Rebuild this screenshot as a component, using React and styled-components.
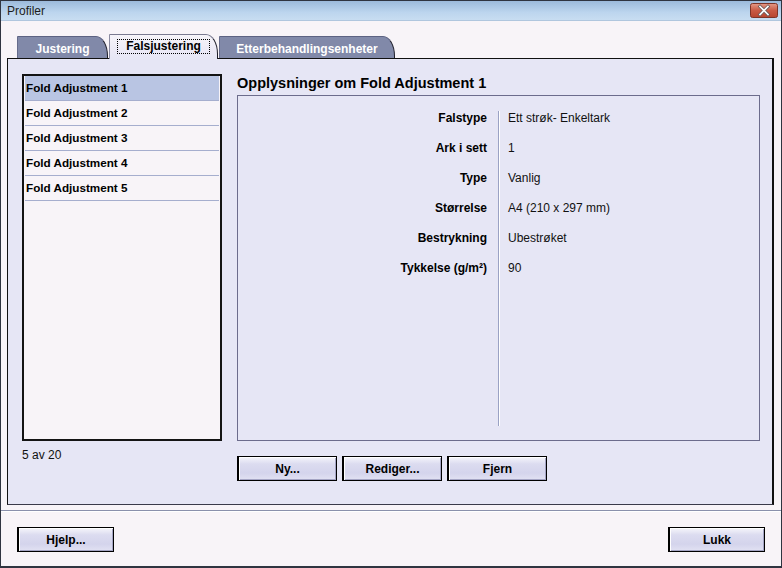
import React from 'react';
import styled, { createGlobalStyle } from 'styled-components';

const GlobalStyle = createGlobalStyle`
  html, body { margin: 0; padding: 0; }
  body {
    font-family: 'Liberation Sans', Arial, sans-serif;
    font-size: 12px;
    color: #000;
    background: #f8f4f8;
  }
`;

const Window = styled.div`
  width: 782px;
  height: 568px;
  box-sizing: border-box;
  border: 1px solid #2f3440;
  border-bottom-width: 2px;
  background: #f8f4f8;
  display: flex;
  flex-direction: column;
`;

const TitleBar = styled.div`
  height: 19px;
  display: flex;
  align-items: center;
  justify-content: space-between;
  padding: 0 3px 0 6px;
  background: linear-gradient(#9cbadb, #bcd5ee 60%, #c8ddf1);
  border-bottom: 1px solid #b0c6de;
  color: #1c1c1c;
  font-size: 12px;
`;

const Content = styled.div`
  padding: 13px 7px 0 6px;
`;

const TabStrip = styled.div`
  display: flex;
  align-items: flex-end;
  gap: 1px;
  height: 24px;
  padding-left: 10px;
  position: relative;
  z-index: 1;
`;

const Tab = styled.div`
  box-sizing: border-box;
  width: ${p => p.w}px;
  height: ${p => (p.active ? 25 : 22)}px;
  margin-bottom: ${p => (p.active ? -1 : 0)}px;
  display: flex;
  align-items: center;
  justify-content: center;
  padding: ${p => (p.active ? '0 0 2px 0' : '2px 0 0 0')};
  font-weight: bold;
  font-size: 12px;
  color: ${p => (p.active ? '#000' : '#fff')};
  background: ${p => (p.active ? 'linear-gradient(#f6f4f9, #eceaf6 60%, #e6e6f5)' : '#8189a9')};
  border-top: 1px solid ${p => (p.active ? '#7a7a90' : '#5c6282')};
  border-left: 1px solid ${p => (p.active ? '#8a8aa0' : '#666c8c')};
  border-right: 1px solid #1e1e2a;
  border-top-right-radius: 12px 20px;
`;

const FocusLabel = styled.span`
  border: 1px dotted #000;
  padding: 0 8px;
  line-height: 13px;
`;

const Panel = styled.div`
  box-sizing: border-box;
  height: 447px;
  background: #e6e6f5;
  border: 1px solid #111;
  border-right-width: 2px;
  border-bottom: 1px solid #3a3a4a;
  padding: 15px 12px 0 14px;
  display: flex;
  gap: 15px;
`;

const LeftCol = styled.div`
  width: 200px;
  display: flex;
  flex-direction: column;
`;

const List = styled.div`
  box-sizing: border-box;
  height: 367px;
  background: #f8f4f8;
  border: 2px solid #141414;
  padding: 0 1px 0 1px;
`;

const ListItem = styled.div`
  height: 24px;
  line-height: 24px;
  padding-left: 1px;
  border-bottom: 1px solid #a6aece;
  font-weight: bold;
  font-size: 11.7px;
  background: ${p => (p.selected ? '#b9c5e3' : 'transparent')};
`;

const Count = styled.div`
  margin-top: 7px;
  font-size: 12px;
  color: #111;
`;

const RightCol = styled.div`
  flex: 1;
  display: flex;
  flex-direction: column;
`;

const Heading = styled.div`
  font-weight: bold;
  font-size: 14.5px;
  line-height: 16px;
  margin: 1px 0 4px;
`;

const DetailsBox = styled.div`
  box-sizing: border-box;
  height: 346px;
  border: 1px solid #6c6c8c;
  padding: 15px 0 14px;
  display: flex;
`;

const LabelCol = styled.div`
  box-sizing: border-box;
  width: 260px;
  padding-right: 11px;
  text-align: right;
  display: flex;
  flex-direction: column;
  gap: 16px;
`;

const ValueCol = styled.div`
  flex: 1;
  padding-left: 9px;
  border-left: 1px solid #9aa2c4;
  box-shadow: inset 1px 0 0 #ffffff;
  display: flex;
  flex-direction: column;
  gap: 16px;
`;

const Label = styled.div`
  font-weight: bold;
  font-size: 12px;
  line-height: 14px;
`;

const Value = styled.div`
  font-size: 12px;
  line-height: 14px;
  color: #111;
`;

const ButtonRow = styled.div`
  display: flex;
  gap: 5px;
  margin-top: 15px;
`;

const Button = styled.button`
  box-sizing: border-box;
  width: ${p => p.w || 100}px;
  height: 25px;
  padding: 0;
  border: 1px solid #000;
  border-left-width: 2px;
  background: linear-gradient(#f6f6fb, #dcdcf0 30%, #d4d4ec 70%, #e2e2f3);
  box-shadow: inset 1px 1px 0 #ffffff, inset -1px -1px 0 #a4a4c4;
  font-family: 'Liberation Sans', Arial, sans-serif;
  font-weight: bold;
  font-size: 12px;
  color: #000;
`;

const Footer = styled.div`
  margin-top: 5px;
  border-top: 1px solid #8a90ac;
  box-shadow: inset 0 1px 0 #ffffff;
  padding: 16px 16px 0 16px;
  display: flex;
  justify-content: space-between;
`;

const CloseIcon = () => (
  <svg width="28" height="15" viewBox="0 0 28 15">
    <defs>
      <linearGradient id="cg" x1="0" y1="0" x2="0" y2="1">
        <stop offset="0" stopColor="#e59a88" />
        <stop offset="0.5" stopColor="#c95a44" />
        <stop offset="1" stopColor="#b8452f" />
      </linearGradient>
    </defs>
    <rect x="0.5" y="0.5" width="27" height="14" rx="2" fill="url(#cg)" stroke="#7e3427" />
    <path d="M10 3.5 L18 11.5 M18 3.5 L10 11.5" stroke="#6a5a5a" strokeWidth="3.2" strokeLinecap="square" />
    <path d="M10 3.5 L18 11.5 M18 3.5 L10 11.5" stroke="#ffffff" strokeWidth="1.6" strokeLinecap="square" />
  </svg>
);

const items = ['Fold Adjustment 1', 'Fold Adjustment 2', 'Fold Adjustment 3', 'Fold Adjustment 4', 'Fold Adjustment 5'];

const details = [
  ['Falstype', 'Ett strøk- Enkeltark'],
  ['Ark i sett', '1'],
  ['Type', 'Vanlig'],
  ['Størrelse', 'A4 (210 x 297 mm)'],
  ['Bestrykning', 'Ubestrøket'],
  ['Tykkelse (g/m²)', '90'],
];

export default function App() {
  return (
    <>
      <GlobalStyle />
      <Window>
        <TitleBar>
          <span>Profiler</span>
          <CloseIcon />
        </TitleBar>
        <Content>
          <TabStrip>
            <Tab w={91}>Justering</Tab>
            <Tab w={109} active>
              <FocusLabel>Falsjustering</FocusLabel>
            </Tab>
            <Tab w={176}>Etterbehandlingsenheter</Tab>
          </TabStrip>
          <Panel>
            <LeftCol>
              <List>
                {items.map((t, i) => (
                  <ListItem key={t} selected={i === 0}>{t}</ListItem>
                ))}
              </List>
              <Count>5 av 20</Count>
            </LeftCol>
            <RightCol>
              <Heading>Opplysninger om Fold Adjustment 1</Heading>
              <DetailsBox>
                <LabelCol>
                  {details.map(([l]) => <Label key={l}>{l}</Label>)}
                </LabelCol>
                <ValueCol>
                  {details.map(([l, v]) => <Value key={l}>{v}</Value>)}
                </ValueCol>
              </DetailsBox>
              <ButtonRow>
                <Button>Ny...</Button>
                <Button>Rediger...</Button>
                <Button>Fjern</Button>
              </ButtonRow>
            </RightCol>
          </Panel>
        </Content>
        <Footer>
          <Button w={97}>Hjelp...</Button>
          <Button w={97}>Lukk</Button>
        </Footer>
      </Window>
    </>
  );
}
